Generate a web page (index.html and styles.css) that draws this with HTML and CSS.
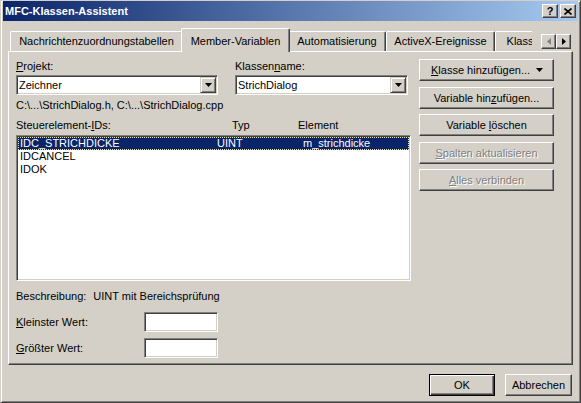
FILE: index.html
```html
<!DOCTYPE html>
<html lang="de">
<head>
<meta charset="utf-8">
<title>MFC-Klassen-Assistent</title>
<link rel="stylesheet" href="styles.css">
</head>
<body>
<div class="window">
  <div class="titlebar">
    <span class="title">MFC-Klassen-Assistent</span>
    <div class="title-buttons">
      <span class="tbtn tbtn-help">?</span>
      <span class="tbtn"><svg width="8" height="7" viewBox="0 0 8 7"><path d="M0.5 0.5 L7.5 6.5 M7.5 0.5 L0.5 6.5" stroke="#000" stroke-width="1.6" fill="none"/></svg></span>
    </div>
  </div>

  <div class="tabctl">
    <div class="tabrow">
      <div class="tab tab-msg">Nachrichtenzuordnungstabellen</div>
      <div class="tab tab-sel">Member-Variablen</div>
      <div class="tab tab-auto">Automatisierung</div>
      <div class="tab tab-activex">ActiveX-Ereignisse</div>
      <div class="tab tab-klass">Klasseninfo</div>
    </div>
    <div class="tabscroll">
      <span class="sbtn"><svg width="4" height="7" viewBox="0 0 4 7"><path d="M4 0 L0 3.5 L4 7 Z" fill="#808080"/></svg></span>
      <span class="sbtn"><svg width="4" height="7" viewBox="0 0 4 7"><path d="M0 0 L4 3.5 L0 7 Z" fill="#000"/></svg></span>
    </div>
    <div class="panel">
      <div class="leftcol">
        <div class="field-row">
          <div class="field field-proj">
            <span class="label"><u>P</u>rojekt:</span>
            <div class="combo">
              <span class="combo-text">Zeichner</span>
              <span class="dropbtn"><svg width="7" height="4" viewBox="0 0 7 4"><path d="M0 0 H7 L3.5 4 Z" fill="#000"/></svg></span>
            </div>
          </div>
          <div class="field field-class">
            <span class="label">Klassen<u>n</u>ame:</span>
            <div class="combo">
              <span class="combo-text">StrichDialog</span>
              <span class="dropbtn"><svg width="7" height="4" viewBox="0 0 7 4"><path d="M0 0 H7 L3.5 4 Z" fill="#000"/></svg></span>
            </div>
          </div>
        </div>
        <div class="path">C:\...\StrichDialog.h, C:\...\StrichDialog.cpp</div>
        <div class="list-header">
          <span>Steuerelement-<u>I</u>Ds:</span>
          <span>Typ</span>
          <span>Element</span>
        </div>
        <div class="listbox">
          <div class="lrow lrow-sel"><span>IDC_STRICHDICKE</span><span>UINT</span><span>m_strichdicke</span></div>
          <div class="lrow"><span>IDCANCEL</span><span></span><span></span></div>
          <div class="lrow"><span>IDOK</span><span></span><span></span></div>
        </div>
        <div class="desc"><span>Beschreibung:</span><span class="desc-val">UINT mit Bereichsprüfung</span></div>
        <div class="vrow">
          <span class="vlabel"><u>K</u>leinster Wert:</span>
          <span class="edit"></span>
        </div>
        <div class="vrow vrow-second">
          <span class="vlabel"><u>G</u>rößter Wert:</span>
          <span class="edit"></span>
        </div>
      </div>
      <div class="rightcol">
        <button class="btn btn-menu"><span><u>K</u>lasse hinzufügen...</span><svg width="7" height="4" viewBox="0 0 7 4"><path d="M0 0 H7 L3.5 4 Z" fill="#000"/></svg></button>
        <button class="btn"><span>Variable hin<u>z</u>ufügen...</span></button>
        <button class="btn"><span>Variable <u>l</u>öschen</span></button>
        <button class="btn btn-disabled"><span><u>S</u>palten aktualisieren</span></button>
        <button class="btn btn-disabled"><span><u>A</u>lles verbinden</span></button>
      </div>
    </div>
  </div>

  <div class="footer">
    <button class="btn btn-default btn-ok"><span>OK</span></button>
    <button class="btn btn-cancel"><span>Abbrechen</span></button>
  </div>
</div>
</body>
</html>
```

FILE: styles.css
```css
* { box-sizing: border-box; }

html, body {
  margin: 0;
  padding: 0;
  background: #d4d0c8;
}

.window {
  width: 581px;
  height: 403px;
  background: #d4d0c8;
  border: 1px solid;
  border-color: #d4d0c8 #404040 #404040 #d4d0c8;
  box-shadow: inset 1px 1px #fff, inset -1px -1px #808080;
  padding: 0 2px 2px 2px;
  font: 11px "Liberation Sans", Arial, sans-serif;
  color: #000;
  display: flex;
  flex-direction: column;
}

/* Title bar */
.titlebar {
  height: 20px;
  flex: none;
  background: linear-gradient(to right, #0a246a, #a6caf0);
  display: flex;
  align-items: center;
  justify-content: space-between;
  padding: 0 2px;
}

.title {
  color: #fff;
  font-weight: bold;
  font-size: 11px;
}

.title-buttons {
  display: flex;
  gap: 2px;
}

.tbtn {
  width: 16px;
  height: 14px;
  background: #d4d0c8;
  border: 1px solid;
  border-color: #fff #404040 #404040 #fff;
  box-shadow: inset -1px -1px #808080;
  display: flex;
  align-items: center;
  justify-content: center;
  font-weight: bold;
  font-size: 11px;
  line-height: 12px;
}

/* Tab control */
.tabctl {
  position: relative;
  margin: 7px 0 0 5px;
  width: 565px;
  flex: none;
}

.tabrow {
  display: flex;
  align-items: flex-start;
  height: 24px;
  margin-bottom: -1px;
  position: relative;
  z-index: 1;
  width: 524px;
  overflow: hidden;
  padding-left: 2px;
}

.tab {
  flex: none;
  height: 20px;
  margin-top: 3px;
  border-top: 1px solid #fff;
  border-left: 1px solid #fff;
  border-right: 1px solid #404040;
  box-shadow: inset -1px 0 #808080;
  border-radius: 2px 2px 0 0;
  padding-top: 3px;
  line-height: 13px;
  text-align: center;
  white-space: nowrap;
  background: #d4d0c8;
}

.tab-msg { width: 173px; }
.tab-auto { width: 98px; }
.tab-activex { width: 109px; }
.tab-klass { width: 80px; }

.tab-sel {
  width: 109px;
  height: 24px;
  margin: 0 -2px;
  padding-top: 6px;
  position: relative;
  z-index: 2;
}

.tabscroll {
  position: absolute;
  left: 533px;
  top: 6px;
  display: flex;
  z-index: 3;
}

.sbtn {
  width: 15px;
  height: 15px;
  background: #d4d0c8;
  border: 1px solid;
  border-color: #fff #404040 #404040 #fff;
  box-shadow: inset -1px -1px #808080;
  display: flex;
  align-items: center;
  justify-content: center;
}

.panel {
  height: 314px;
  border: 1px solid;
  border-color: #fff #404040 #404040 #fff;
  box-shadow: inset -1px -1px #808080;
  padding: 7px 0 0 7px;
  display: flex;
  gap: 8px;
}

/* Left column */
.leftcol {
  width: 395px;
  display: flex;
  flex-direction: column;
}

.field-row {
  display: flex;
  gap: 17px;
  margin-top: 1px;
}

.field {
  display: flex;
  flex-direction: column;
  gap: 2px;
}

.field-proj { width: 202px; }
.field-class { width: 173px; }

.label { line-height: 13px; }

.combo {
  height: 20px;
  background: #fff;
  border: 1px solid;
  border-color: #808080 #fff #fff #808080;
  box-shadow: inset 1px 1px #404040, inset -1px -1px #d4d0c8;
  padding: 1px;
  display: flex;
  align-items: center;
  justify-content: space-between;
}

.combo-text {
  padding-left: 1px;
  line-height: 13px;
}

.dropbtn {
  width: 16px;
  height: 16px;
  background: #d4d0c8;
  border: 1px solid;
  border-color: #d4d0c8 #404040 #404040 #d4d0c8;
  box-shadow: inset 1px 1px #fff, inset -1px -1px #808080;
  display: flex;
  align-items: center;
  justify-content: center;
}

.path {
  margin-top: 4px;
  line-height: 13px;
}

.list-header {
  margin-top: 7px;
  line-height: 13px;
  display: grid;
  grid-template-columns: 216px 66px 1fr;
}

.listbox {
  margin-top: 3px;
  height: 146px;
  background: #fff;
  border: 1px solid;
  border-color: #808080 #fff #fff #808080;
  box-shadow: inset 1px 1px #404040, inset -1px -1px #d4d0c8;
  padding: 1px;
}

.lrow {
  display: grid;
  grid-template-columns: 197px 86px 1fr;
  padding-left: 2px;
  line-height: 13px;
  height: 13px;
  white-space: nowrap;
}

.lrow-sel {
  background: #0a246a;
  color: #fff;
  outline: 1px dotted #e8e4b0;
  outline-offset: -1px;
}

.desc {
  margin-top: 9px;
  line-height: 13px;
  display: flex;
}

.desc-val { margin-left: 7px; }

.vrow {
  display: flex;
  align-items: center;
  margin-top: 9px;
}

.vrow-second { margin-top: 6px; }

.vlabel {
  width: 128px;
  line-height: 13px;
}

.edit {
  width: 74px;
  height: 20px;
  background: #fff;
  border: 1px solid;
  border-color: #808080 #fff #fff #808080;
  box-shadow: inset 1px 1px #404040, inset -1px -1px #d4d0c8;
}

/* Right column */
.rightcol {
  width: 135px;
  display: flex;
  flex-direction: column;
  gap: 5.5px;
}

.btn {
  height: 22px;
  background: #d4d0c8;
  border: 1px solid;
  border-color: #fff #404040 #404040 #fff;
  box-shadow: inset -1px -1px #808080;
  font: inherit;
  color: #000;
  padding: 0;
  margin: 0;
  display: flex;
  align-items: center;
  justify-content: center;
  white-space: nowrap;
  border-radius: 0;
}

.btn-menu {
  justify-content: space-between;
  padding: 0 10px 0 11px;
}

.btn-disabled {
  color: #808080;
  text-shadow: 1px 1px 0 #fff;
}

/* Footer */
.footer {
  display: flex;
  justify-content: flex-end;
  gap: 10px;
  margin-top: 9px;
  padding-right: 6px;
}

.btn-ok { width: 66px; }
.btn-cancel { width: 67px; }

.btn-default {
  border: 1px solid #000;
  box-shadow: inset 1px 1px #fff, inset -1px -1px #404040, inset -2px -2px #808080;
}
```
